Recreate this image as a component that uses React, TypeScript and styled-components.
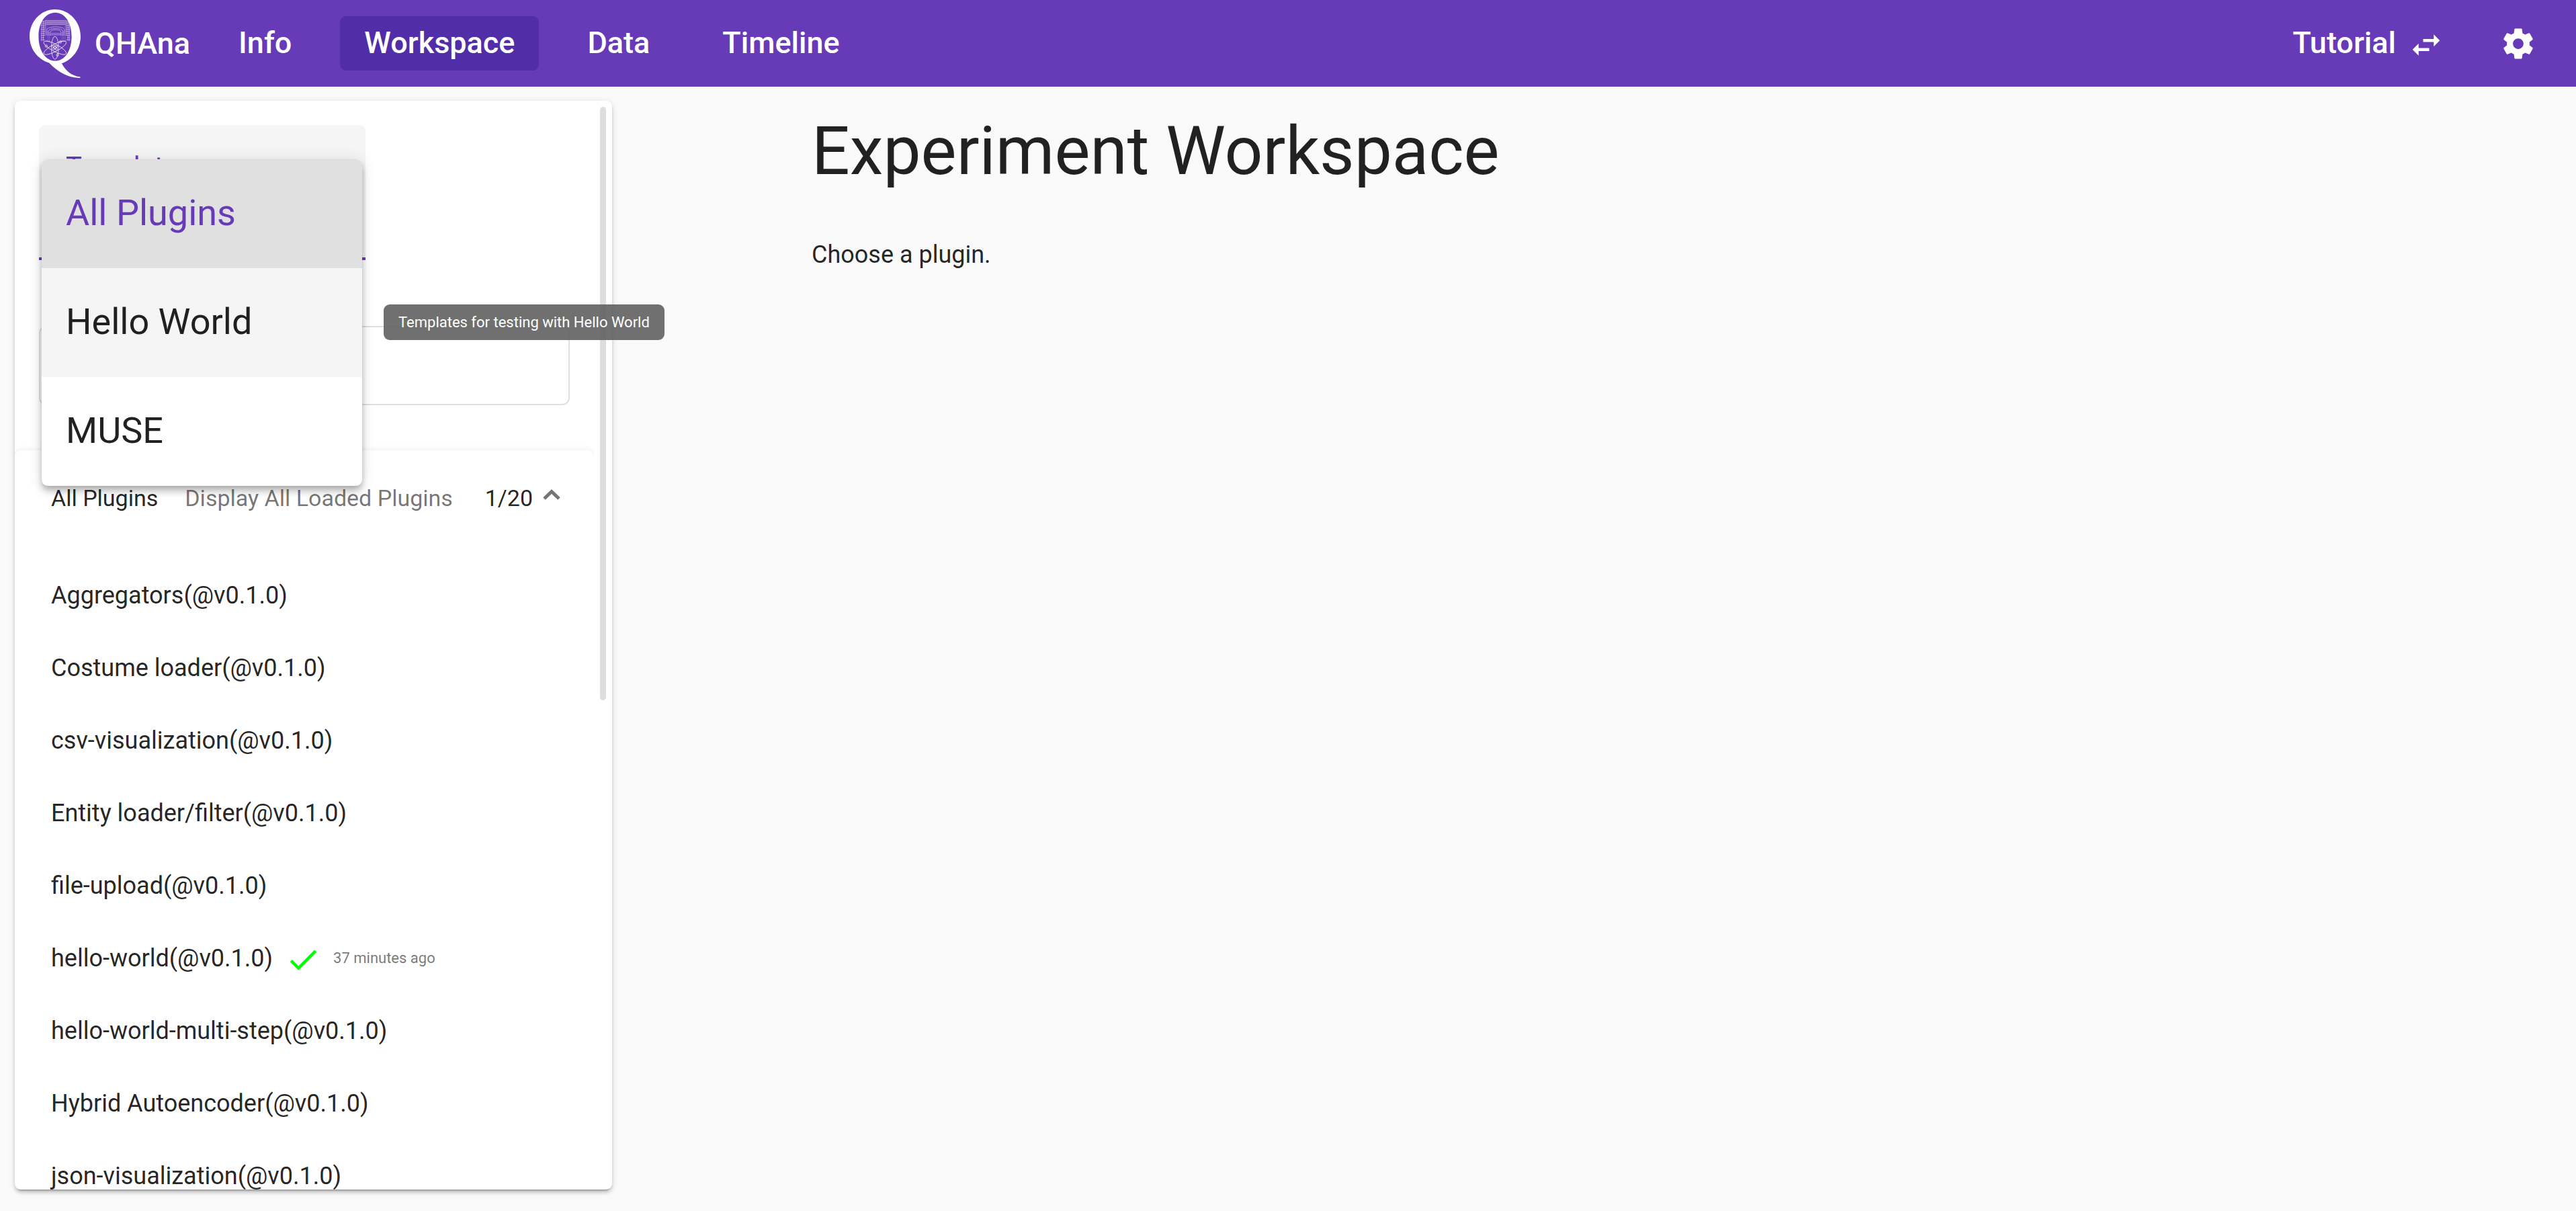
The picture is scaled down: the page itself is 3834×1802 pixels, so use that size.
import React from "react";
import styled, { createGlobalStyle, css } from "styled-components";

const GlobalStyle = createGlobalStyle`
  *, *::before, *::after { box-sizing: border-box; }
  body {
    margin: 0;
    background: #fafafa;
    color: rgba(0, 0, 0, 0.87);
    font-family: Roboto, "Liberation Sans", sans-serif;
    font-size: 36px;
    line-height: 48px;
  }
`;

const Page = styled.div`
  display: grid;
  grid-template-rows: auto minmax(0, 1fr);
  height: 100vh;
`;

/* ---------- toolbar ---------- */

const Toolbar = styled.header`
  display: flex;
  align-items: center;
  min-height: 129px;
  padding: 0 36px 0 44px;
  background: #673ab7;
  color: #fff;
  font-size: 45px;
  font-weight: 500;
`;

const Brand = styled.a`
  display: flex;
  align-items: center;
  gap: 21px;
  color: inherit;
  line-height: 46px;
  text-decoration: none;
`;

const Nav = styled.nav`
  display: flex;
  gap: 36px;
  margin-left: 36px;
`;

const toolbarButton = css`
  display: flex;
  align-items: center;
  height: 81px;
  padding: 0 36px 2px;
  border: 0;
  border-radius: 9px;
  color: #fff;
  font: inherit;
  text-decoration: none;
`;

const NavLink = styled.a<{ $active?: boolean }>`
  ${toolbarButton}
  background: ${(p) => (p.$active ? "#512da8" : "transparent")};
`;

const Spacer = styled.div`
  flex: 1;
`;

const TutorialButton = styled.button`
  ${toolbarButton}
  gap: 18px;
  background: transparent;

  svg {
    margin-top: 6px;
  }
`;

const IconButton = styled.button`
  display: grid;
  place-items: center;
  width: 100px;
  height: 100px;
  margin-left: 24px;
  padding: 0;
  border: 0;
  background: transparent;
  color: #fff;
`;

const Icon = styled.svg`
  display: block;
  width: 54px;
  height: 54px;
  fill: currentColor;
  flex: none;
`;

const LogoSvg = styled.svg`
  display: block;
  width: 76px;
  height: 102px;
`;

/* ---------- layout ---------- */

const Body = styled.div`
  display: grid;
  grid-template-columns: 889px minmax(0, 1fr);
  min-height: 0;
  padding: 21px 22px 32px;
`;

const Sidebar = styled.aside`
  position: relative;
  min-height: 0;
  border-radius: 9px;
  background: #fff;
  box-shadow:
    0 7px 2px -5px rgba(0, 0, 0, 0.2),
    0 5px 5px 0 rgba(0, 0, 0, 0.14),
    0 2px 11px 0 rgba(0, 0, 0, 0.12);
`;

const SidebarContent = styled.div`
  height: 100%;
  margin-right: 27px;
  padding-top: 36px;
  overflow: hidden;
  border-radius: 9px 0 0 9px;
`;

const ScrollThumb = styled.div`
  position: absolute;
  top: 9px;
  right: 9px;
  width: 9px;
  height: 883px;
  border-radius: 5px;
  background: #dedede;
`;

const Filters = styled.div`
  display: flex;
  flex-direction: column;
  gap: 98px;
  padding: 0 36px 67px;
`;

const SelectField = styled.div`
  display: flex;
  flex-direction: column;
  width: 486px;
  height: 201px;
  padding: 39px 40px 0;
  border-bottom: 4px solid #673ab7;
  border-radius: 9px 9px 0 0;
  background: #f5f5f5;
`;

const SelectLabel = styled.label`
  color: #673ab7;
  font-size: 40px;
`;

const Select = styled.select`
  height: 80px;
  border: 0;
  outline: 0;
  background: transparent;
  color: inherit;
  font: inherit;
  font-size: 54px;
  appearance: none;
`;

const SearchInput = styled.input`
  width: 100%;
  height: 118px;
  padding: 0 36px;
  border: 2px solid #e0e0e0;
  border-radius: 11px;
  outline: 0;
  background: transparent;
  color: inherit;
  font: inherit;
`;

/* ---------- plugin group ---------- */

const Group = styled.section`
  border-radius: 9px;
  background: #fff;
  box-shadow:
    0 7px 2px -5px rgba(0, 0, 0, 0.2),
    0 5px 5px 0 rgba(0, 0, 0, 0.14),
    0 2px 11px 0 rgba(0, 0, 0, 0.12);
`;

const GroupHeader = styled.button`
  display: flex;
  align-items: center;
  width: 100%;
  height: 141px;
  padding: 0 50px 0 54px;
  border: 0;
  background: transparent;
  color: inherit;
  font: inherit;
  font-size: 34px;
  text-align: left;
  white-space: nowrap;
`;

const GroupTitle = styled.span`
  margin-right: 40px;
`;

const GroupDescription = styled.span`
  flex: 1;
  color: rgba(0, 0, 0, 0.54);
`;

const Chevron = styled.svg`
  width: 26px;
  height: 16px;
  margin-left: 15px;
  margin-bottom: 10px;
  fill: none;
  stroke: rgba(0, 0, 0, 0.54);
  stroke-width: 5;
`;

const PluginList = styled.ul`
  margin: 0;
  padding: 21px 0 0;
  list-style: none;
`;

const PluginItem = styled.li`
  display: flex;
  align-items: center;
  height: 108px;
  padding: 0 54px;
`;

const CheckIcon = styled(Icon)`
  margin: 4px 18px 0;
  color: #00ff00;
`;

const Ago = styled.small`
  color: rgba(0, 0, 0, 0.54);
  font-size: 22px;
`;

/* ---------- open template menu ---------- */

const Menu = styled.ul`
  position: absolute;
  top: 87px;
  left: 40px;
  z-index: 2;
  width: 477px;
  margin: 0;
  padding: 0;
  border-radius: 9px;
  background: #fff;
  box-shadow:
    0 5px 9px -2px rgba(0, 0, 0, 0.2),
    0 9px 11px 0 rgba(0, 0, 0, 0.14),
    0 2px 22px 0 rgba(0, 0, 0, 0.12);
  list-style: none;
`;

const Option = styled.li<{ $state?: "selected" | "hovered" }>`
  position: relative;
  height: 162px;
  padding: 0 36px;
  font-size: 54px;
  line-height: 160px;
  color: ${(p) => (p.$state === "selected" ? "#673ab7" : "inherit")};
  background: ${(p) =>
    p.$state === "selected" ? "#e0e0e0" : p.$state === "hovered" ? "#f5f5f5" : "transparent"};

  &:first-child {
    border-radius: 9px 9px 0 0;
  }
`;

const Tooltip = styled.span`
  position: absolute;
  top: 54px;
  left: calc(100% + 32px);
  padding: 0 22px;
  border-radius: 9px;
  background: rgba(97, 97, 97, 0.9);
  color: #fff;
  font-size: 22px;
  line-height: 53px;
  white-space: nowrap;
`;

/* ---------- main ---------- */

const Main = styled.main`
  padding: 21px 0 0 297px;
`;

const Title = styled.h1`
  margin: 0 0 76px;
  font-size: 100px;
  font-weight: 400;
  line-height: 108px;
`;

const Hint = styled.p`
  margin: 0;
`;

const plugins: { name: string; ago?: string }[] = [
  { name: "Aggregators(@v0.1.0)" },
  { name: "Costume loader(@v0.1.0)" },
  { name: "csv-visualization(@v0.1.0)" },
  { name: "Entity loader/filter(@v0.1.0)" },
  { name: "file-upload(@v0.1.0)" },
  { name: "hello-world(@v0.1.0)", ago: "37 minutes ago" },
  { name: "hello-world-multi-step(@v0.1.0)" },
  { name: "Hybrid Autoencoder(@v0.1.0)" },
  { name: "json-visualization(@v0.1.0)" },
];

function Logo() {
  return (
    <LogoSvg viewBox="43 43 227 305" aria-hidden="true">
      <path
        fill="#fff"
        fillRule="evenodd"
        d="M156 43C219 43 270 97 270 163C270 219 235 266 186 283C203 317 232 340 268 343V348C212 349 165 318 130 281C79 264 43 219 43 163C43 97 93 43 156 43ZM157 57C116 57 83 98 83 163C83 229 116 272 157 272C198 272 230 229 230 163C230 98 198 57 157 57Z"
      />
      <g fill="none" stroke="#fff" strokeOpacity="0.7" strokeWidth="2">
        <path d="M112 92H206M114 97H204M114 103H204M114 110H204" />
        <path strokeDasharray="3 3" d="M116 100H202M116 107H202" />
        <path d="M96 94V184M104 94V184M112 92V160M206 92V160M214 94V184M221 94V184" />
        <path d="M94 96H110M98 104H112M94 113H112M98 122H110M94 131H112M98 140H112M94 149H110M94 158H112M96 168H108M94 178H112" />
        <path d="M208 96H223M206 104H220M206 113H223M208 122H220M206 131H223M206 140H220M208 149H223M206 158H223M210 168H221M206 178H223" />
        <path d="M120 160V134C120 116 198 116 198 134V160M127 160V140C127 124 191 124 191 140V160M135 160V144C135 130 183 130 183 144V160" />
        <path strokeDasharray="2 3" d="M118 116V156M124 140V184M131 146V184M187 146V184M194 140V184M201 116V184" />
        <path d="M114 184H134M178 184H206M138 150H180M136 156H182" />
      </g>
      <g fill="none" stroke="#fff" strokeOpacity="0.9" strokeWidth="2.4">
        <ellipse cx="156" cy="214" rx="16" ry="51" />
        <ellipse cx="156" cy="214" rx="16" ry="56" transform="rotate(62 156 214)" />
        <ellipse cx="156" cy="214" rx="16" ry="56" transform="rotate(-62 156 214)" />
        <circle cx="156" cy="212" r="6" />
        <circle cx="149" cy="206" r="5" />
        <circle cx="163" cy="207" r="5" />
        <circle cx="150" cy="218" r="5" />
        <circle cx="162" cy="219" r="5" />
        <circle cx="117" cy="206" r="5" />
        <circle cx="180" cy="188" r="5" />
        <circle cx="167" cy="246" r="5" />
      </g>
    </LogoSvg>
  );
}

export default function App() {
  return (
    <>
      <GlobalStyle />
      <Page>
        <Toolbar>
          <Brand href="#">
            <Logo />
            QHAna
          </Brand>
          <Nav>
            <NavLink href="#info">Info</NavLink>
            <NavLink href="#workspace" $active aria-current="page">
              Workspace
            </NavLink>
            <NavLink href="#data">Data</NavLink>
            <NavLink href="#timeline">Timeline</NavLink>
          </Nav>
          <Spacer />
          <TutorialButton type="button">
            Tutorial
            <Icon viewBox="0 0 24 24" aria-hidden="true">
              <path d="M6.99 11L3 15l3.99 4v-3H14v-2H6.99v-3zM21 9l-3.99-4v3H10v2h7.01v3L21 9z" />
            </Icon>
          </TutorialButton>
          <IconButton type="button" aria-label="Settings">
            <Icon viewBox="0 0 24 24" aria-hidden="true">
              <path d="M19.43 12.98c.04-.32.07-.64.07-.98s-.03-.66-.07-.98l2.11-1.65c.19-.15.24-.42.12-.64l-2-3.46c-.12-.22-.39-.3-.61-.22l-2.49 1c-.52-.4-1.08-.73-1.69-.98l-.38-2.65C14.46 2.18 14.25 2 14 2h-4c-.25 0-.46.18-.49.42l-.38 2.65c-.61.25-1.17.59-1.69.98l-2.49-1c-.23-.09-.49 0-.61.22l-2 3.46c-.13.22-.07.49.12.64l2.11 1.65c-.04.32-.07.65-.07.98s.03.66.07.98l-2.11 1.65c-.19.15-.24.42-.12.64l2 3.46c.12.22.39.3.61.22l2.49-1c.52.4 1.08.73 1.69.98l.38 2.65c.03.24.24.42.49.42h4c.25 0 .46-.18.49-.42l.38-2.65c.61-.25 1.17-.59 1.69-.98l2.49 1c.23.09.49 0 .61-.22l2-3.46c.12-.22.07-.49-.12-.64l-2.11-1.65zM12 15.5c-1.93 0-3.5-1.57-3.5-3.5s1.57-3.5 3.5-3.5 3.5 1.57 3.5 3.5-1.57 3.5-3.5 3.5z" />
            </Icon>
          </IconButton>
        </Toolbar>

        <Body>
          <Sidebar>
            <SidebarContent>
              <Filters>
                <SelectField>
                  <SelectLabel htmlFor="template">Template</SelectLabel>
                  <Select id="template" defaultValue="all">
                    <option value="all">All Plugins</option>
                    <option value="hello">Hello World</option>
                    <option value="muse">MUSE</option>
                  </Select>
                </SelectField>
                <SearchInput type="text" aria-label="Search plugins" />
              </Filters>

              <Group>
                <GroupHeader type="button" aria-expanded="true">
                  <GroupTitle>All Plugins</GroupTitle>
                  <GroupDescription>Display All Loaded Plugins</GroupDescription>
                  <span>1/20</span>
                  <Chevron viewBox="0 0 26 16" aria-hidden="true">
                    <path d="M2 14L13 3.5L24 14" />
                  </Chevron>
                </GroupHeader>
                <PluginList>
                  {plugins.map((plugin) => (
                    <PluginItem key={plugin.name}>
                      {plugin.name}
                      {plugin.ago && (
                        <>
                          <CheckIcon viewBox="0 0 24 24" aria-hidden="true">
                            <path d="M9 16.17L4.83 12l-1.42 1.41L9 19 21 7l-1.41-1.41z" />
                          </CheckIcon>
                          <Ago>{plugin.ago}</Ago>
                        </>
                      )}
                    </PluginItem>
                  ))}
                </PluginList>
              </Group>
            </SidebarContent>
            <ScrollThumb />

            <Menu role="listbox" aria-label="Template">
              <Option role="option" aria-selected="true" $state="selected">
                All Plugins
              </Option>
              <Option role="option" aria-selected="false" $state="hovered">
                Hello World
                <Tooltip role="tooltip">Templates for testing with Hello World</Tooltip>
              </Option>
              <Option role="option" aria-selected="false">
                MUSE
              </Option>
            </Menu>
          </Sidebar>

          <Main>
            <Title>Experiment Workspace</Title>
            <Hint>Choose a plugin.</Hint>
          </Main>
        </Body>
      </Page>
    </>
  );
}
